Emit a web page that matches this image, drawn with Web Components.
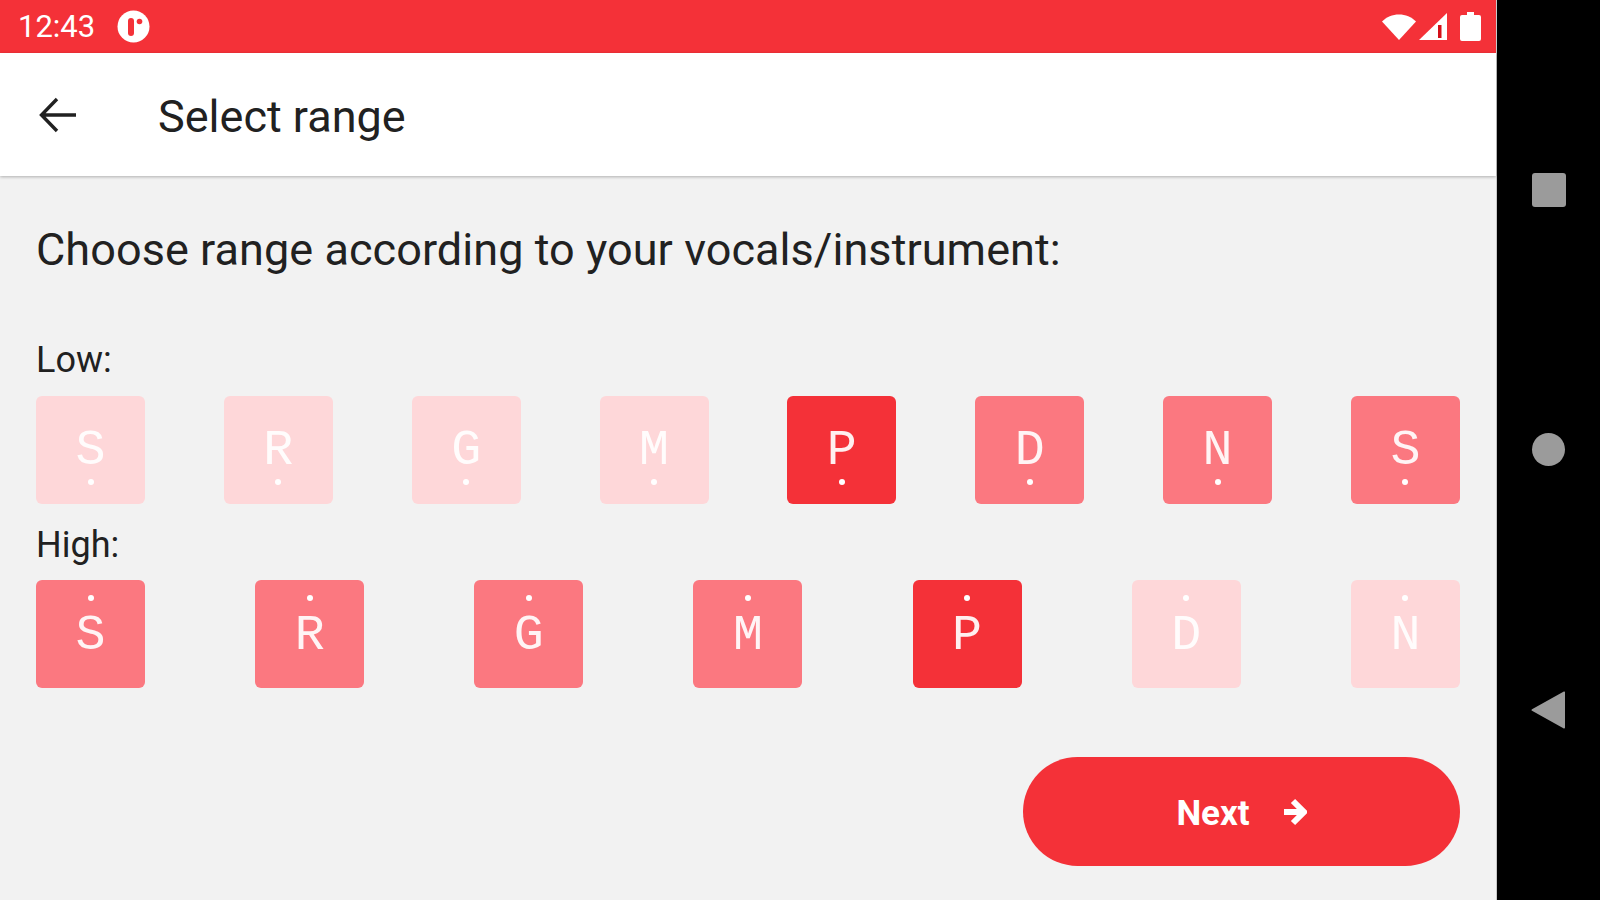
<!DOCTYPE html>
<html>
<head>
<meta charset="utf-8">
<style>
  html, body { margin: 0; height: 100%; background: #000; font-family: Roboto, "Liberation Sans", sans-serif; }
</style>
</head>
<body>
<app-screen>
  <status-bar time="12:43"></status-bar>
  <app-bar title="Select range"></app-bar>
  <range-page></range-page>
</app-screen>
<script>
class AppScreen extends HTMLElement {
    connectedCallback() {
        this.attachShadow({ mode: 'open' });
        this.shadowRoot.innerHTML = `
            <style>
                :host { display: flex; width: 1600px; height: 900px; overflow: hidden; background: #000; }
                .main { width: 1497px; display: flex; flex-direction: column; background: #f2f2f2; border-right: 1px solid #c8c8c8; box-sizing: border-box; }
                .nav { flex: 1; display: flex; flex-direction: column; align-items: center; padding-top: 173px; box-sizing: border-box; }
                .square { width: 34px; height: 34px; border-radius: 3px; background: #9b9b9b; }
                .circle { width: 33px; height: 33px; border-radius: 50%; background: #9b9b9b; margin-top: 226px; }
                .back { margin-top: 225px; display: block; }
            </style>
            <div class="main"><slot></slot></div>
            <div class="nav">
                <div class="square"></div>
                <div class="circle"></div>
                <svg class="back" width="36" height="38" viewBox="0 0 36 38"><path d="M34 1.5v35a1 1 0 0 1-1.600.8L1 19.800a1 1 0 0 1 0-1.600L32.400.7A1 1 0 0 1 34 1.500z" fill="#9b9b9b"/></svg>
            </div>
        `;
    }
}

class StatusBar extends HTMLElement {
    connectedCallback() {
        this.attachShadow({ mode: 'open' });
        this.shadowRoot.innerHTML = `
            <style>
                :host { display: flex; align-items: center; height: 53px; background: #f43138; color: #fff; padding: 0 15px 0 18px; flex: none; box-sizing: border-box; }
                .time { font-size: 31px; line-height: 53px; }
                .app { margin-left: 22px; display: block; }
                .icons { margin-left: auto; display: flex; align-items: center; }
                svg { display: block; }
            </style>
            <span class="time">${this.getAttribute('time')}</span>
            <svg class="app" width="33" height="33" viewBox="0 0 33 33">
                <circle cx="16.500" cy="16.500" r="16" fill="#fff"/>
                <rect x="11" y="8" width="6" height="18" rx="3" fill="#f43138"/>
                <circle cx="22.500" cy="11.500" r="2.800" fill="#f43138"/>
            </svg>
            <div class="icons">
                <svg width="34" height="26" viewBox="0 0 34 26"><path d="M0 7.500C4.500 3 10.500.500 17 .500S29.500 3 34 7.500L17 26z" fill="#fff"/></svg>
                <svg style="margin-left:3px" width="28" height="27" viewBox="0 0 28 27"><path d="M28 0v27H0z" fill="#fff"/><rect x="19" y="12" width="3.500" height="13" fill="#d40f18"/></svg>
                <svg style="margin-left:13px" width="21" height="29" viewBox="0 0 21 29"><path d="M7 0h7v3h5a2 2 0 0 1 2 2v22a2 2 0 0 1-2 2H2a2 2 0 0 1-2-2V5a2 2 0 0 1 2-2h5z" fill="#fff"/></svg>
            </div>
        `;
    }
}

class AppBar extends HTMLElement {
    connectedCallback() {
        this.attachShadow({ mode: 'open' });
        this.shadowRoot.innerHTML = `
            <style>
                :host { display: flex; align-items: center; height: 123px; background: #fff; flex: none; padding-left: 39px; box-sizing: border-box; box-shadow: 0 1px 3px rgba(0,0,0,.28); position: relative; }
                svg { display: block; }
                .title { margin: 3px 0 0 81px; font-size: 45px; color: #212121; }
            </style>
            <svg width="38" height="36" viewBox="0 0 38 36"><path d="M37 18H3M18 2L2.500 18 18 34" fill="none" stroke="#212121" stroke-width="3.400"/></svg>
            <span class="title">${this.getAttribute('title')}</span>
        `;
    }
}

class NoteKey extends HTMLElement {
    connectedCallback() {
        const high = this.hasAttribute('high');
        this.attachShadow({ mode: 'open' });
        this.shadowRoot.innerHTML = `
            <style>
                :host { display: flex; flex-direction: column; align-items: center; width: 109px; height: 108px; border-radius: 6px; box-sizing: border-box; color: rgba(255,255,255,.92); padding-top: ${high ? 15 : 36}px; }
                :host([level="on"]) { background: #f43138; }
                :host([level="mid"]) { background: #fb7880; }
                :host([level="off"]) { background: #fed7d9; }
                .note { height: 33px; line-height: 37px; font-family: "Liberation Mono", "DejaVu Sans Mono", monospace; font-size: 50px; }
                .dot { width: 6px; height: 6px; border-radius: 50%; background: #fff; }
            </style>
            ${high
                ? `<div class="dot" style="margin-bottom:16px"></div><div class="note"><slot></slot></div>`
                : `<div class="note"><slot></slot></div><div class="dot" style="margin-top:14px"></div>`}
        `;
    }
}

class RangePage extends HTMLElement {
    connectedCallback() {
        const low = [['S','off'],['R','off'],['G','off'],['M','off'],['P','on'],['D','mid'],['N','mid'],['S','mid']];
        const high = [['S','mid'],['R','mid'],['G','mid'],['M','mid'],['P','on'],['D','off'],['N','off']];
        this.attachShadow({ mode: 'open' });
        this.shadowRoot.innerHTML = `
            <style>
                :host { display: flex; flex-direction: column; flex: 1; padding: 0 36px 0 36px; box-sizing: border-box; color: #212121; }
                h1 { margin: 47px 0 0; font-weight: 400; font-size: 45px; line-height: 54px; letter-spacing: .06px; }
                .label { font-size: 36px; line-height: 40px; }
                .low { margin-top: 63px; }
                .high { margin-top: 21px; }
                .row { display: flex; justify-content: space-between; }
                .low + .row { margin-top: 16px; }
                .high + .row { margin-top: 15px; }
                .foot { display: flex; justify-content: flex-end; margin-top: 69px; }
            </style>
            <h1>Choose range according to your vocals/instrument:</h1>
            <div class="label low">Low:</div>
            <div class="row">${low.map(k => `<note-key level="${k[1]}">${k[0]}</note-key>`).join('')}</div>
            <div class="label high">High:</div>
            <div class="row">${high.map(k => `<note-key high level="${k[1]}">${k[0]}</note-key>`).join('')}</div>
            <div class="foot"><next-button>Next</next-button></div>
        `;
    }
}

class NextButton extends HTMLElement {
    connectedCallback() {
        this.attachShadow({ mode: 'open' });
        this.shadowRoot.innerHTML = `
            <style>
                :host { display: flex; align-items: center; justify-content: center; width: 437px; height: 109px; border-radius: 55px; background: #f43138; color: #fff; font-size: 35px; font-weight: 700; }
                .txt { margin-top: 3px; }
                svg { display: block; margin-left: 33px; }
            </style>
            <span class="txt"><slot></slot></span>
            <svg width="24" height="28" viewBox="0 0 24 28"><path d="M1 14h19M10 3l11 11-11 11" fill="none" stroke="#fff" stroke-width="6"/></svg>
        `;
    }
}

customElements.define('app-screen', AppScreen);
customElements.define('status-bar', StatusBar);
customElements.define('app-bar', AppBar);
customElements.define('note-key', NoteKey);
customElements.define('range-page', RangePage);
customElements.define('next-button', NextButton);
</script>
</body>
</html>
